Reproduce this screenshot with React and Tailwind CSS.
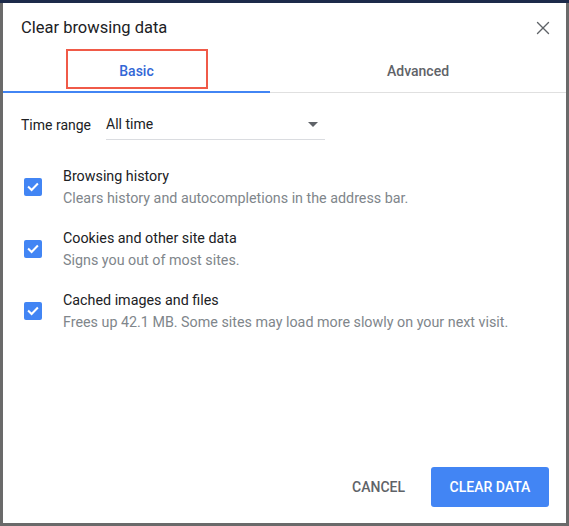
import { X } from "lucide-react";

const items = [
  { title: "Browsing history", desc: "Clears history and autocompletions in the address bar." },
  { title: "Cookies and other site data", desc: "Signs you out of most sites." },
  { title: "Cached images and files", desc: "Frees up 42.1 MB. Some sites may load more slowly on your next visit." },
];

function Check() {
  return (
    <div className="w-[18px] h-[18px] rounded-[2px] bg-[#4285f4] flex items-center justify-center shrink-0">
      <svg width="12" height="12" viewBox="0 0 12 12" fill="none">
        <path d="M1.8 6.2 L4.6 9 L10.2 3.2" stroke="white" strokeWidth="2" strokeLinecap="square" />
      </svg>
    </div>
  );
}

export default function App() {
  return (
    <div className="w-[569px] h-[526px] bg-[#6a6a6a] flex flex-col overflow-hidden font-['Roboto',sans-serif]">
      <div className="h-[3px] bg-[#1c2a4a] shrink-0" />
      <div className="flex px-[3px]">
        <div className="w-[563px] h-[520px] bg-white flex flex-col">
          {/* Header */}
          <div className="flex items-center justify-between pl-[18px] pr-[12px] pt-[4px] h-[46px]">
            <h1 className="text-[16.5px] text-[#202124]">Clear browsing data</h1>
            <X size={22} strokeWidth={1.5} className="text-[#5f6368]" />
          </div>

          {/* Tabs */}
          <div className="flex h-[44px] border-b border-[#e0e0e0]">
            <div className="w-[267px] relative flex items-center justify-center">
              <span className="text-[14px] font-medium text-[#3367d6] mt-[2px]">Basic</span>
              <div className="absolute left-[63px] top-[0px] w-[142px] h-[40px] border-2 border-[#f05a48]" />
              <div className="absolute left-0 right-0 bottom-[-1px] h-[2px] bg-[#4285f4]" />
            </div>
            <div className="flex-1 flex items-center justify-center">
              <span className="text-[14px] font-medium text-[#5f6368] mt-[2px]">Advanced</span>
            </div>
          </div>

          {/* Time range */}
          <div className="flex items-center pl-[18px] mt-[17px] h-[30px]">
            <span className="text-[14px] text-[#202124] w-[85px]">Time range</span>
            <div className="w-[219px] h-[30px] border-b border-[#dadce0] flex items-center justify-between pr-[7px]">
              <span className="text-[14px] text-[#202124]">All time</span>
              <svg width="10" height="5" viewBox="0 0 10 5">
                <path d="M0 0 L10 0 L5 5 Z" fill="#5f6368" />
              </svg>
            </div>
          </div>

          {/* Items */}
          <div className="flex flex-col gap-[20px] mt-[26px]">
            {items.map((it) => (
              <div key={it.title} className="flex items-center pl-[21px] h-[42px]">
                <Check />
                <div className="ml-[21px] flex flex-col gap-[4px]">
                  <span className="text-[14.3px] leading-[18px] text-[#202124]">{it.title}</span>
                  <span className="text-[14.3px] leading-[18px] text-[#80868b]">{it.desc}</span>
                </div>
              </div>
            ))}
          </div>

          {/* Footer */}
          <div className="mt-auto flex items-center justify-end gap-[10px] pr-[17px] pb-[16px]">
            <button className="h-[40px] px-[16px] text-[14px] font-medium text-[#5f6368]">CANCEL</button>
            <button className="h-[40px] w-[118px] rounded-[3px] bg-[#4285f4] text-[14px] font-medium text-white">
              CLEAR DATA
            </button>
          </div>
        </div>
      </div>
    </div>
  );
}
